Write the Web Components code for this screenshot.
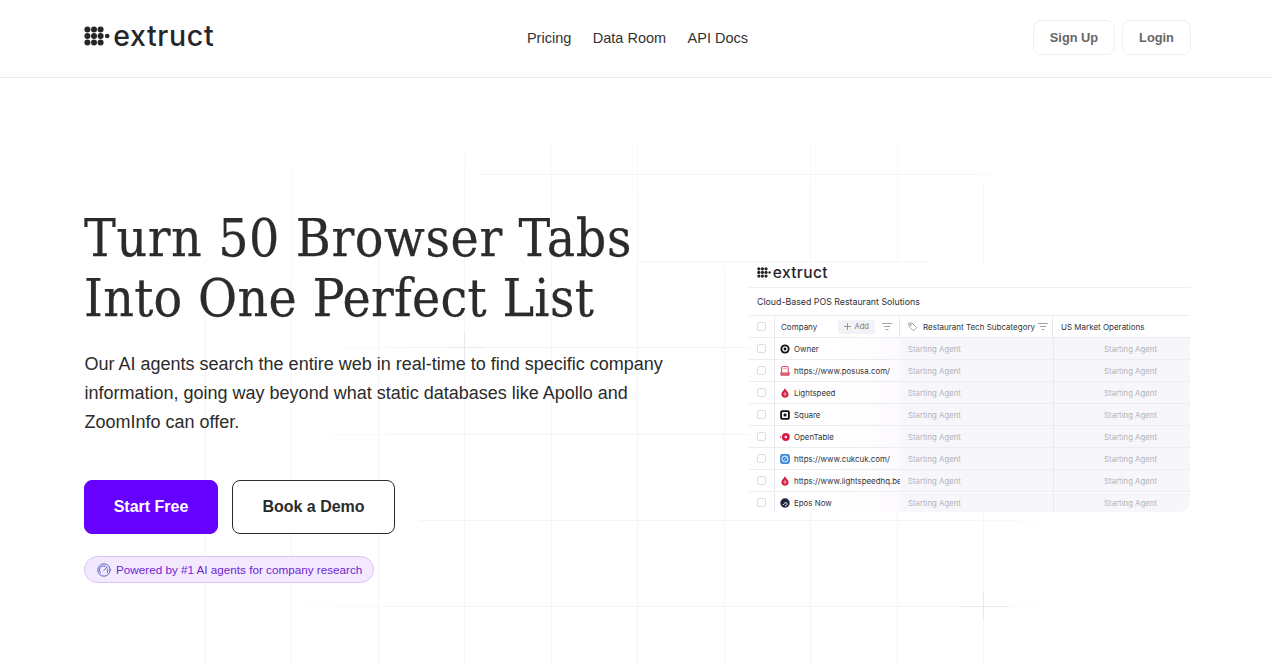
<!DOCTYPE html>
<html lang="en">
<head>
<meta charset="utf-8">
<title>Extruct</title>
<style>
  html, body { margin: 0; padding: 0; background: #fff; }
  body { font-family: "Liberation Sans", Arial, sans-serif; color: #2b2b2b; overflow: hidden; }
</style>
</head>
<body>
<site-header></site-header>
<hero-section>
  <span slot="title"><span style="letter-spacing:.6px">Turn 50 Browser Tabs</span><br><span style="letter-spacing:.3px">Into One Perfect List</span></span>
  <span slot="lead">Our AI agents search the entire web in real-time to find specific company information, going way beyond what static databases like Apollo and ZoomInfo can offer.</span>
  <cta-button slot="actions" variant="primary">Start Free</cta-button>
  <cta-button slot="actions" variant="outline">Book a Demo</cta-button>
  <powered-badge slot="badge">Powered by #1 AI agents for company research</powered-badge>
  <table-preview slot="preview"></table-preview>
</hero-section>

<script>
class LogoMark extends HTMLElement {
  connectedCallback() {
    if (this.shadowRoot) return;
    this.attachShadow({ mode: 'open' });
    const size = Number(this.getAttribute('size') || 28.5);
    const k = size / 28.5;
    const dots = [];
    [3.4, 10, 16.6].forEach((y) => {
      [3.4, 10, 16.6].forEach((x) => dots.push(`<circle cx="${x}" cy="${y}" r="3"/>`));
    });
    this.shadowRoot.innerHTML = `
      <style>
        :host { display: inline-flex; align-items: center; gap: ${3.2 * k}px; color: #26262a; }
        svg { display: block; flex: none; }
        span {
          font-family: Inter, "Liberation Sans", sans-serif;
          font-size: ${size}px;
          font-weight: 500;
          line-height: 1;
          letter-spacing: ${0.65 * k}px;
        }
      </style>
      <svg width="${26 * k}" height="${20 * k}" viewBox="0 0 26 20" fill="currentColor">
        ${dots.join('')}<circle cx="23.2" cy="10" r="2.3"/>
      </svg>
      <span>extruct</span>
    `;
  }
}

class SiteHeader extends HTMLElement {
  connectedCallback() {
    if (this.shadowRoot) return;
    this.attachShadow({ mode: 'open' });
    this.shadowRoot.innerHTML = `
      <style>
        :host {
          display: grid;
          grid-template-columns: 1fr auto 1fr;
          align-items: center;
          height: 77px;
          padding: 0 82px 0 84px;
          border-bottom: 1px solid #ececee;
          background: #fff;
          position: relative;
          z-index: 2;
        }
        logo-mark { margin-bottom: 5px; justify-self: start; }
        nav { display: flex; gap: 21.5px; font-size: 14.5px; color: #333; padding-bottom: 2px; }
        .auth { display: flex; justify-content: flex-end; gap: 7px; margin-bottom: 2px; }
        .auth a {
          display: flex;
          align-items: center;
          justify-content: center;
          height: 33px;
          border: 1px solid #efeff1;
          border-radius: 8px;
          font-size: 12.8px;
          font-weight: 700;
          color: #666;
        }
        .auth a:first-child { width: 80px; }
        .auth a:last-child { width: 67px; }
      </style>
      <logo-mark size="28.5"></logo-mark>
      <nav><a>Pricing</a><a>Data Room</a><a>API Docs</a></nav>
      <div class="auth"><a>Sign Up</a><a>Login</a></div>
    `;
  }
}

class GridBackdrop extends HTMLElement {
  connectedCallback() {
    if (this.shadowRoot) return;
    this.attachShadow({ mode: 'open' });
    // page coordinates minus the header height
    const top = 78;
    const v = [
      [205, 300, 666], [291, 170, 666], [378, 240, 666], [464, 150, 666], [551, 140, 666],
      [637, 140, 666], [724, 260, 666], [810, 140, 666], [897, 142, 666], [983, 180, 666]
    ];
    const h = [
      [174, 480, 990], [261, 640, 930], [347, 340, 760], [434, 330, 760],
      [520, 420, 1075], [606, 290, 1075]
    ];
    const lines = [
      ...v.map(([x, a, b]) => `<line x1="${x + 0.5}" y1="${a - top}" x2="${x + 0.5}" y2="${b - top}" stroke="url(#fv)"/>`),
      ...h.map(([y, a, b]) => `<line x1="${a}" y1="${y + 0.5 - top}" x2="${b}" y2="${y + 0.5 - top}" stroke="url(#fh)"/>`)
    ];
    this.shadowRoot.innerHTML = `
      <style>
        :host { position: absolute; inset: 0; display: block; pointer-events: none; }
        svg { display: block; width: 100%; height: 100%; }
      </style>
      <svg viewBox="0 0 1273 588" preserveAspectRatio="none">
        <defs>
          <linearGradient id="fv" gradientUnits="userSpaceOnUse" x1="0" y1="50" x2="0" y2="588">
            <stop offset="0" stop-color="#f5f5f6" stop-opacity="0.5"/>
            <stop offset="0.3" stop-color="#f5f5f6"/>
            <stop offset="1" stop-color="#f5f5f7"/>
          </linearGradient>
          <linearGradient id="fh" gradientUnits="userSpaceOnUse" x1="250" y1="0" x2="1080" y2="0">
            <stop offset="0" stop-color="#f5f5f6" stop-opacity="0"/>
            <stop offset="0.2" stop-color="#f5f5f6"/>
            <stop offset="0.85" stop-color="#f5f5f6"/>
            <stop offset="1" stop-color="#f5f5f6" stop-opacity="0"/>
          </linearGradient>
        </defs>
        ${lines.join('')}
        <path d="M464.5 255v28M446 269.5h38M983.5 515v26M962 528.5h46" stroke="#e9e9ec" fill="none"/>
      </svg>
    `;
  }
}

class HeroSection extends HTMLElement {
  connectedCallback() {
    if (this.shadowRoot) return;
    this.attachShadow({ mode: 'open' });
    this.shadowRoot.innerHTML = `
      <style>
        :host {
          display: grid;
          grid-template-columns: 1fr 442px;
          align-items: start;
          position: relative;
          height: 588px;
          box-sizing: border-box;
          padding: 130px 82px 0 84px;
        }
        .copy, .side { position: relative; }
        .side { margin-top: 55px; }
        h1 {
          margin: 0;
          font-family: "DejaVu Serif Condensed", "DejaVu Serif", "Liberation Serif", serif;
          font-stretch: condensed;
          font-weight: 400;
          font-size: 53px;
          line-height: 60px;
          color: #2b2b2b;
          white-space: nowrap;
          -webkit-text-stroke: 0.25px #2b2b2b;
        }
        p { margin: 22px 0 0 0.5px; width: 590px; font-size: 18px; line-height: 29px; color: #2b2b2b; }
        .actions { display: flex; gap: 14px; margin-top: 43px; }
        .badge { margin-top: 22px; display: flex; }
      </style>
      <grid-backdrop></grid-backdrop>
      <div class="copy">
        <h1><slot name="title"></slot></h1>
        <p><slot name="lead"></slot></p>
        <div class="actions"><slot name="actions"></slot></div>
        <div class="badge"><slot name="badge"></slot></div>
      </div>
      <div class="side"><slot name="preview"></slot></div>
    `;
  }
}

class CtaButton extends HTMLElement {
  connectedCallback() {
    if (this.shadowRoot) return;
    this.attachShadow({ mode: 'open' });
    const primary = this.getAttribute('variant') === 'primary';
    this.shadowRoot.innerHTML = `
      <style>
        :host {
          display: inline-flex;
          align-items: center;
          justify-content: center;
          box-sizing: border-box;
          height: 54px;
          width: ${primary ? 134 : 163}px;
          border-radius: 8px;
          border: 1px solid ${primary ? '#6600ff' : '#2b2b2b'};
          background: ${primary ? '#6600ff' : '#fff'};
          color: ${primary ? '#fff' : '#2b2b2b'};
          font-size: 16px;
          font-weight: 700;
        }
      </style>
      <slot></slot>
    `;
  }
}

class PoweredBadge extends HTMLElement {
  connectedCallback() {
    if (this.shadowRoot) return;
    this.attachShadow({ mode: 'open' });
    this.shadowRoot.innerHTML = `
      <style>
        :host {
          display: inline-flex;
          align-items: center;
          gap: 5px;
          box-sizing: border-box;
          height: 27px;
          width: 290px;
          padding-left: 12px;
          border: 1px solid #d9c2f5;
          border-radius: 14px;
          background: #f3e9ff;
          color: #6d1fd1;
          font-size: 11.7px;
          white-space: nowrap;
        }
        svg { flex: none; display: block; }
      </style>
      <svg width="14" height="14" viewBox="0 0 14 14" fill="none" stroke="#5a5fc8" stroke-width="1" stroke-linecap="round">
        <circle cx="7" cy="7" r="6.2"/>
        <path d="M3.4 9.6A4 4 0 0 1 9.6 4.2"/>
        <path d="M7 7.4 10 4.2"/>
        <path d="M10.6 6.2c.2.8.1 2.2-.3 3.3"/>
      </svg>
      <slot></slot>
    `;
  }
}

const COMPANY_ICONS = {
  owner: '<circle cx="5" cy="5" r="4.6" fill="#111"/><circle cx="5" cy="5" r="2.1" fill="none" stroke="#fff" stroke-width="1.3"/>',
  pos: '<path d="M1.6 6.8V1.4q0-.8.8-.8h5q.8 0 .8.8v5.4" fill="#fff" stroke="#c9283e" stroke-width=".9"/><path d="M.4 6.8h9.2l-.5 2.6H1z" fill="#e0677a" stroke="#c9283e" stroke-width=".5"/><path d="M3 2.6h3.6" stroke="#e87c8b" stroke-width="0.8"/>',
  lightspeed: '<path d="M5 0.2c.5 1.4 3.6 3.9 3.6 6.1C8.6 8.4 7 9.8 5 9.8S1.4 8.4 1.4 6.3C1.4 4.1 4.5 1.6 5 0.2Z" fill="#d4213d"/><path d="M5 3.4 6.6 6 5 8.4 3.4 6Z" fill="#f28a98"/>',
  square: '<rect x="0.2" y="0.2" width="9.6" height="9.6" rx="2" fill="#111"/><rect x="2" y="2" width="6" height="6" rx="0.8" fill="#fff"/><rect x="3.6" y="3.6" width="2.8" height="2.8" fill="#111"/>',
  opentable: '<circle cx="5.8" cy="5" r="3.9" fill="#da1a45"/><circle cx="5.8" cy="5" r="1.2" fill="#fff"/><circle cx="0.6" cy="5" r="0.7" fill="#da1a45"/>',
  cukcuk: '<rect x="0.1" y="0.1" width="9.8" height="9.8" rx="2.4" fill="#3b87d6"/><circle cx="5" cy="5" r="2.9" fill="none" stroke="#cfe5fa" stroke-width="1.1"/><path d="M3.6 6.4 6.8 3.2" stroke="#cfe5fa" stroke-width="0.9"/>',
  epos: '<circle cx="5" cy="5" r="4.7" fill="#1d2440"/><path d="M2.6 6.8c1.2-.2 2.4-1.2 2.9-2.5.9.2 1.6.8 1.6 1.7 0 1-1 1.9-2.2 1.8" fill="none" stroke="#fff" stroke-width="1"/>'
};

const COMPANY_ROWS = [
  ['owner', 'Owner'],
  ['pos', 'https://www.posusa.com/'],
  ['lightspeed', 'Lightspeed'],
  ['square', 'Square'],
  ['opentable', 'OpenTable'],
  ['cukcuk', 'https://www.cukcuk.com/'],
  ['lightspeed', 'https://www.lightspeedhq.be/'],
  ['epos', 'Epos Now']
];

const FILTER_ICON = '<svg class="filter" width="10" height="7" viewBox="0 0 10 7" fill="none" stroke="#8b8b92" stroke-width="0.8"><path d="M0 .5h10M1.8 3.5h6.4M3.6 6.5h2.8"/></svg>';

class TablePreview extends HTMLElement {
  connectedCallback() {
    if (this.shadowRoot) return;
    this.attachShadow({ mode: 'open' });
    const rows = COMPANY_ROWS.map(([icon, name]) => `
      <div class="row">
        <div class="check"><i></i></div>
        <div class="name"><svg width="10" height="10" viewBox="0 0 10 10">${COMPANY_ICONS[icon]}</svg><span>${name}</span></div>
        <div class="agent">Starting Agent</div>
        <div class="agent right">Starting Agent</div>
      </div>`).join('');
    this.shadowRoot.innerHTML = `
      <style>
        :host {
          display: block;
          width: 442px;
          font-family: Inter, "Liberation Sans", sans-serif;
          color: #33333a;
          font-size: 8px;
          position: relative;
        }
        .brand { height: 24px; padding: 2px 0 0 8px; box-sizing: border-box; display: flex; align-items: flex-start; background: #fff; }
        .title { height: 28px; display: flex; align-items: center; padding-left: 8px; font-size: 8.8px; border-top: 1px solid #f0f0f2; background: #fff; box-sizing: border-box; color: #2f2f35; }
        .table { width: 441px; border-radius: 0 0 10px 0; overflow: hidden; border-top: 1px solid #ececf0; box-sizing: border-box; }
        .row, .head { display: grid; grid-template-columns: 26px 125px 153px 137px; height: 22px; box-sizing: border-box; border-bottom: 1px solid #ececf2; background: #fff; }
        .row:last-child { border-bottom: 0; height: 20px; padding-top: 1px; }
        .check { display: flex; align-items: center; justify-content: center; border-right: 1px solid #e8e8ee; background: #fff; }
        .check i { display: block; width: 7px; height: 7px; border: 1px solid #dcdce1; border-radius: 2px; background: #fff; }
        .name { display: flex; align-items: center; gap: 4px; padding-left: 5px; overflow: hidden; white-space: nowrap; background: linear-gradient(90deg, #fff 50%, #fdfafd 100%); font-size: 7.9px; }
        .name svg { flex: none; }
        .agent { display: flex; align-items: center; padding-left: 8px; color: #b4b4ba; background: #f6f6fb; font-size: 7.8px; }
        .row .agent + .agent { border-left: 1px solid #e8e8f0; }
        .right { justify-content: flex-end; padding-right: 33px; padding-left: 0; }
        .head > div { display: flex; align-items: center; white-space: nowrap; }
        .head .co { padding: 0 7px 0 6px; border-right: 1px solid #e8e8ee; }
        .add { display: flex; align-items: center; gap: 3px; height: 14px; padding: 0 6px; margin-left: auto; margin-right: 7px; border-radius: 3px; background: #f3f3f7; color: #7c7c85; font-size: 7.6px; }
        .head .sub { gap: 5px; padding-left: 8px; border-right: 1px solid #e8e8ee; }
        .head .us { padding-left: 8px; }
        .sub .filter { margin-left: -2px; }
      </style>
      <div class="brand"><logo-mark size="15.5"></logo-mark></div>
      <div class="title">Cloud-Based POS Restaurant Solutions</div>
      <div class="table">
        <div class="head">
          <div class="check"><i></i></div>
          <div class="co"><span>Company</span>
            <span class="add"><svg width="7" height="7" viewBox="0 0 7 7" stroke="#7c7c85" stroke-width="0.8"><path d="M3.5 0v7M0 3.5h7"/></svg>Add</span>${FILTER_ICON}</div>
          <div class="sub"><svg width="10" height="10" viewBox="0 0 10 10" fill="none" stroke="#8b8b92" stroke-width="0.8"><path d="M.8 1v3.2l4.6 4.6 3.2-3.2L4 1Z"/><circle cx="2.8" cy="3" r=".6"/></svg><span>Restaurant Tech Subcategory</span>${FILTER_ICON}</div>
          <div class="us">US Market Operations</div>
        </div>
        ${rows}
      </div>
    `;
  }
}

customElements.define('logo-mark', LogoMark);
customElements.define('site-header', SiteHeader);
customElements.define('grid-backdrop', GridBackdrop);
customElements.define('cta-button', CtaButton);
customElements.define('powered-badge', PoweredBadge);
customElements.define('table-preview', TablePreview);
customElements.define('hero-section', HeroSection);
</script>
</body>
</html>
